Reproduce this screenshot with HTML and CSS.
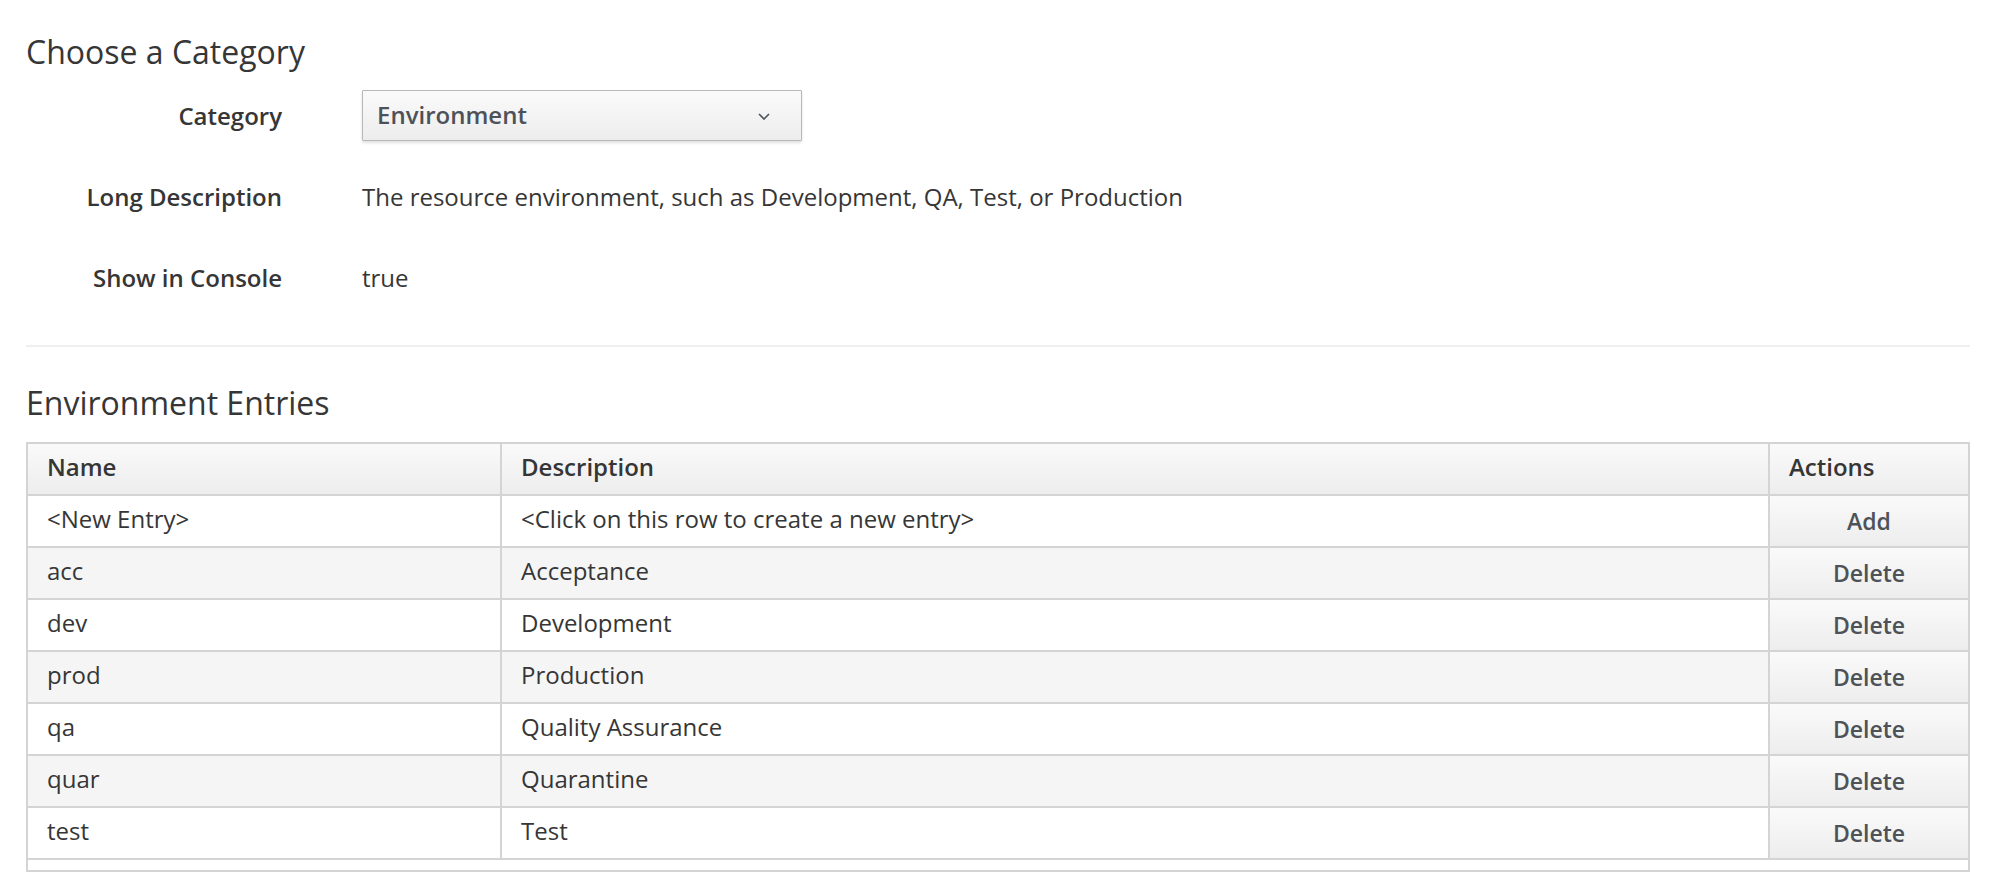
FILE: index.html
```html
<!DOCTYPE html>
<html lang="en">
<head>
    <meta charset="UTF-8">
    <meta name="viewport" content="width=device-width, initial-scale=1.0">
    <title>Environment Entries</title>
    <link rel="stylesheet" href="styles.css">
</head>
<body>

<main class="page">
    <section>
        <h2 class="section-title">Choose a Category</h2>
        <div class="form">
            <div class="form-row">
                <label class="form-label" for="category">Category</label>
                <div class="select-wrap">
                    <select id="category" class="select">
                        <option selected>Environment</option>
                    </select>
                    <svg class="chevron" width="12" height="7" viewBox="0 0 12 7">
                        <path d="M1 1l5 5 5-5" fill="none" stroke="#4d5258" stroke-width="1.6"/>
                    </svg>
                </div>
            </div>
            <div class="form-row">
                <span class="form-label">Long Description</span>
                <span class="form-value">The resource environment, such as Development, QA, Test, or Production</span>
            </div>
            <div class="form-row">
                <span class="form-label">Show in Console</span>
                <span class="form-value">true</span>
            </div>
        </div>
    </section>

    <hr class="divider">

    <section>
        <h2 class="section-title entries-title">Environment Entries</h2>
        <table class="entries">
            <colgroup>
                <col class="col-name">
                <col class="col-desc">
                <col class="col-actions">
            </colgroup>
            <thead>
                <tr>
                    <th>Name</th>
                    <th>Description</th>
                    <th>Actions</th>
                </tr>
            </thead>
            <tbody>
                <tr>
                    <td>&lt;New Entry&gt;</td>
                    <td>&lt;Click on this row to create a new entry&gt;</td>
                    <td class="action-cell"><button class="row-btn">Add</button></td>
                </tr>
                <tr>
                    <td>acc</td>
                    <td>Acceptance</td>
                    <td class="action-cell"><button class="row-btn">Delete</button></td>
                </tr>
                <tr>
                    <td>dev</td>
                    <td>Development</td>
                    <td class="action-cell"><button class="row-btn">Delete</button></td>
                </tr>
                <tr>
                    <td>prod</td>
                    <td>Production</td>
                    <td class="action-cell"><button class="row-btn">Delete</button></td>
                </tr>
                <tr>
                    <td>qa</td>
                    <td>Quality Assurance</td>
                    <td class="action-cell"><button class="row-btn">Delete</button></td>
                </tr>
                <tr>
                    <td>quar</td>
                    <td>Quarantine</td>
                    <td class="action-cell"><button class="row-btn">Delete</button></td>
                </tr>
                <tr>
                    <td>test</td>
                    <td>Test</td>
                    <td class="action-cell"><button class="row-btn">Delete</button></td>
                </tr>
            </tbody>
            <tfoot>
                <tr class="spacer-row">
                    <td colspan="3"></td>
                </tr>
            </tfoot>
        </table>
    </section>
</main>

</body>
</html>
```

FILE: styles.css
```css
body {
    margin: 0;
    font-family: "Open Sans", "Liberation Sans", sans-serif;
    font-size: 24px;
    color: #363636;
    background: #fff;
}
.page {
    padding: 35px 32px 0 26px;
}
.section-title {
    margin: 0;
    font-size: 32px;
    font-weight: 400;
    line-height: 34px;
}
.form {
    display: flex;
    flex-direction: column;
    gap: 30px;
    margin-top: 21px;
}
.form-row {
    display: grid;
    grid-template-columns: 256px 1fr;
    column-gap: 80px;
    align-items: center;
    min-height: 51px;
}
.form-label {
    text-align: right;
    font-weight: 600;
}
.select-wrap {
    position: relative;
    width: 440px;
}
.select {
    display: block;
    width: 100%;
    height: 51px;
    padding: 0 14px 2px;
    appearance: none;
    -webkit-appearance: none;
    border: 1px solid #b7b7b7;
    border-radius: 1px;
    background: linear-gradient(#fafafa, #ededed);
    box-shadow: 0 2px 3px rgba(0,0,0,0.12);
    font: 600 24px "Open Sans", sans-serif;
    color: #4d5258;
}
.chevron {
    position: absolute;
    right: 32px;
    top: 23px;
    pointer-events: none;
}
.divider {
    border: 0;
    height: 2px;
    background: #efefef;
    margin: 42px 0 0;
}
.entries-title {
    margin-top: 39px;
}
.entries {
    width: 100%;
    margin-top: 22px;
    border-collapse: collapse;
    table-layout: fixed;
    border: 2px solid #d4d4d4;
}
.col-name {
    width: 474px;
}
.col-actions {
    width: 200px;
}
.entries th,
.entries td {
    height: 45px;
    padding: 0 19px 5px;
    border: 2px solid #d4d4d4;
    text-align: left;
    white-space: nowrap;
}
.entries th {
    font-weight: 600;
    background: linear-gradient(#fafafa, #ededed);
}
.entries tbody tr:nth-child(even) td {
    background: #f5f5f5;
}
.entries td.action-cell {
    padding: 0;
    background: #fff;
}
.row-btn {
    display: block;
    width: 100%;
    height: 50px;
    border: none;
    background: linear-gradient(#fafafa, #ededed);
    box-shadow: 0 2px 3px rgba(0,0,0,0.1);
    font: 600 23px "Open Sans", sans-serif;
    color: #4d5258;
    cursor: pointer;
}
.row-btn:hover {
    background: #ededed;
}
.entries .spacer-row td {
    height: 10px;
    padding: 0;
    background: #fff;
}
```
